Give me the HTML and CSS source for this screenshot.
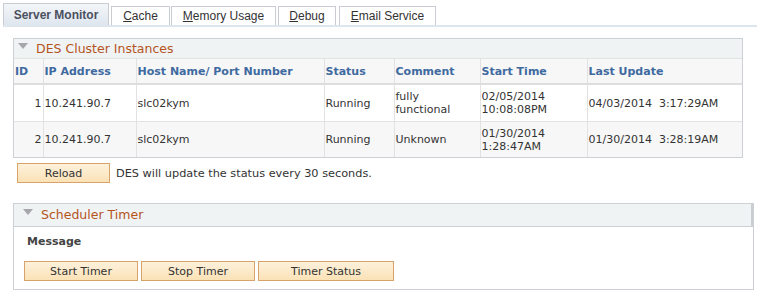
FILE: index.html
```html
<!DOCTYPE html>
<html lang="en">
<head>
  <meta charset="UTF-8">
  <title>DES Monitor</title>
  <link rel="stylesheet" href="styles.css">
</head>
<body>
  <div class="tabs">
    <span class="tab active">Server Monitor</span>
    <span class="tab t-cache"><u>C</u>ache</span>
    <span class="tab t-mem"><u>M</u>emory Usage</span>
    <span class="tab t-debug"><u>D</u>ebug</span>
    <span class="tab t-mail"><u>E</u>mail Service</span>
  </div>

  <div class="box box1">
    <div class="box-head"><span class="tri"></span>DES Cluster Instances</div>
    <table class="grid">
      <colgroup>
        <col style="width:29px"><col style="width:93px"><col style="width:188px">
        <col style="width:70px"><col style="width:86px"><col style="width:107px"><col>
      </colgroup>
      <thead>
        <tr><th>ID</th><th>IP Address</th><th>Host Name/ Port Number</th><th>Status</th><th>Comment</th><th>Start Time</th><th>Last Update</th></tr>
      </thead>
      <tbody>
        <tr class="r1"><td class="num">1</td><td>10.241.90.7</td><td>slc02kym</td><td>Running</td><td>fully<br>functional</td><td>02/05/2014<br>10:08:08PM</td><td>04/03/2014&nbsp; 3:17:29AM</td></tr>
        <tr class="r2"><td class="num">2</td><td>10.241.90.7</td><td>slc02kym</td><td>Running</td><td>Unknown</td><td>01/30/2014<br>1:28:47AM</td><td>01/30/2014&nbsp; 3:28:19AM</td></tr>
      </tbody>
    </table>
  </div>

  <div class="reload-row">
    <button class="btn btn-reload">Reload</button>
    <span class="note">DES will update the status every 30 seconds.</span>
  </div>

  <div class="box box2">
    <div class="box-head head2"><span class="tri"></span>Scheduler Timer</div>
    <div class="box-body">
      <div class="msg">Message</div>
      <div class="btns">
        <button class="btn b-start">Start Timer</button>
        <button class="btn b-stop">Stop Timer</button>
        <button class="btn b-status">Timer Status</button>
      </div>
    </div>
  </div>
</body>
</html>
```

FILE: styles.css
```css
body { margin:0; background:#fff; font-family:"DejaVu Sans", Verdana, sans-serif; font-size:11px; color:#333; }

.tabs { display:flex; align-items:flex-end; margin:3px 5px 0 3px; height:22px; border-bottom:2px solid #dde6ef; }
.tab { font-family:"Liberation Sans", Arial, sans-serif; font-size:12px; color:#333; background:#fff; border:1px solid #c9cdd3; border-bottom:none; height:19px; line-height:19px; text-align:center; margin-right:2px; box-sizing:border-box; }
.tab.active { width:106px; height:22px; line-height:22px; font-weight:bold; color:#4b5060; background:linear-gradient(#f3f6f9,#dfe6ee); }
.t-cache { width:59px; margin-right:1px; }
.t-mem { width:105px; }
.t-debug { width:58px; margin-right:3px; }
.t-mail { width:97px; }

.box { border:1px solid #cdd0d5; margin-left:13px; box-sizing:border-box; }
.box1 { width:730px; margin-top:11px; }
.box-head { height:19px; line-height:19px; background:#f0f3f4; color:#b5541c; font-size:12.5px; padding-left:4px; display:flex; align-items:center; }
.tri { width:0; height:0; border-left:5px solid transparent; border-right:5px solid transparent; border-top:6px solid #a5a7aa; margin:0 8px 6px 0; }

.grid { border-collapse:collapse; width:100%; table-layout:fixed; }
.grid th { background:#f7f7f7; color:#3f6aa0; font-weight:bold; text-align:left; height:23px; padding:1px 1px 0; border-left:1px solid #e2e2e2; border-top:1px solid #e2e2e2; border-bottom:2px solid #dedede; white-space:nowrap; }
.grid th:first-child, .grid td:first-child { border-left:none; }
.grid td { padding:0 1px; border-left:1px solid #e2e2e2; border-top:1px solid #e2e2e2; line-height:13px; vertical-align:middle; }
.grid .r1 td { height:36px; background:#fff; }
.grid .r2 td { height:35px; background:#f7f7f7; }
.grid td.num { text-align:right; padding-right:1px; }

.reload-row { display:flex; align-items:center; margin:5px 0 0 17px; height:20px; }
.btn { font-family:"DejaVu Sans", Verdana, sans-serif; font-size:11px; color:#333; background:linear-gradient(#fdf1dc,#fbe2b6); border:1px solid #d8a26b; height:20px; padding:0; cursor:pointer; }
.btn-reload { width:93px; }
.note { margin-left:6px; font-size:11.3px; }

.box2 { width:741px; margin-top:20px; }
.head2 { height:22px; line-height:22px; padding-left:9px; border-bottom:1px solid #cdd0d5; border-right:2px solid #c9ccd0; }
.box-body { padding:8px 0 8px 10px; }
.msg { font-weight:bold; color:#444; height:13px; line-height:13px; margin-left:3px; }
.btns { display:flex; gap:3px; margin-top:13px; }
.b-start, .b-stop { width:114px; }
.b-status { width:136px; }
```
